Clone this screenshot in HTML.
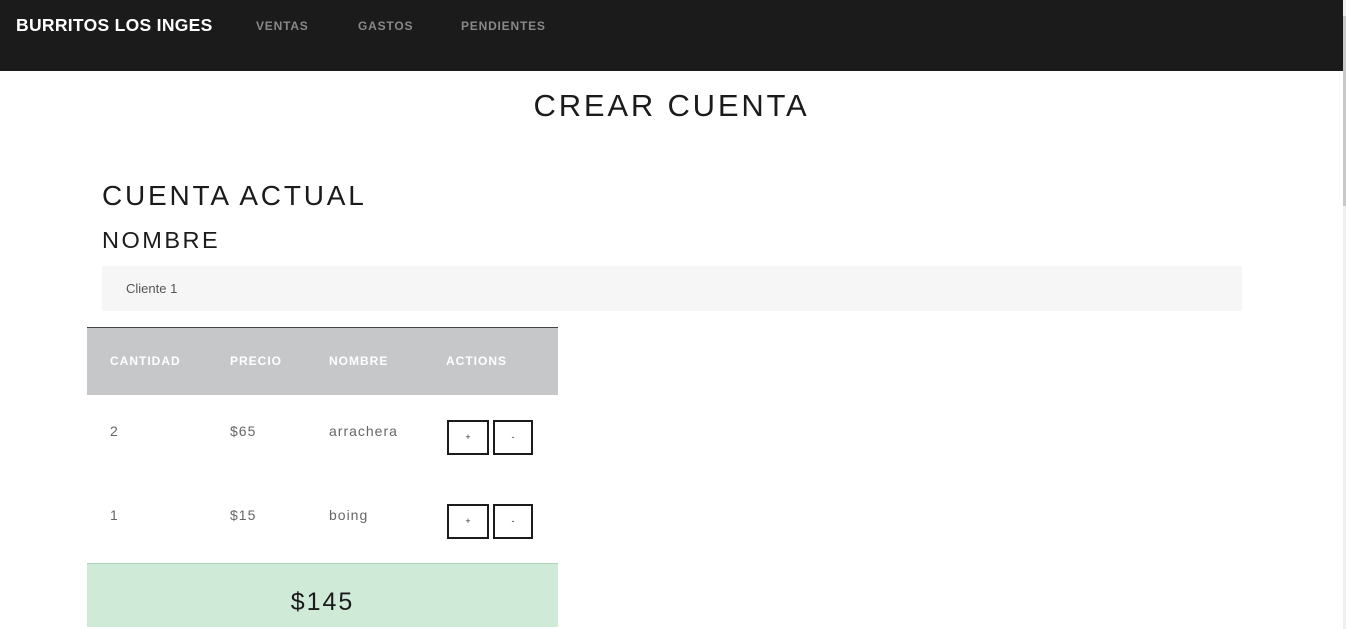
<!DOCTYPE html>
<html><head><style>
*{margin:0;padding:0;box-sizing:border-box}
body{width:1346px;height:629px;overflow:hidden;background:#fff;font-family:"Liberation Sans",sans-serif;position:relative}
.a{position:absolute;white-space:nowrap}
nav{position:absolute;left:0;top:0;width:1343px;height:71px;background:#1b1b1b}
.sb{position:absolute;left:1343px;top:0;width:3px;height:629px;background:#f0f0f0}
.th{position:absolute;top:354px;color:#fff;font-size:12px;font-weight:bold;letter-spacing:1px}
.td{position:absolute;color:#666;font-size:14px;letter-spacing:1px}
.b{position:absolute;width:42px;height:35px;border:2px solid #1b1b1b;font-size:9px;text-align:center;line-height:31px;color:#333}
</style></head><body>
<nav></nav>
<div class="sb"><div style="position:absolute;left:0;top:16px;width:3px;height:190px;background:#c8c8c8"></div></div>
<div class="a" style="left:16px;top:15px;color:#fff;font-size:17.5px;font-weight:bold;letter-spacing:0.3px">BURRITOS LOS INGES</div>
<div class="a" style="left:256px;top:19px;color:#888;font-size:12px;font-weight:bold;letter-spacing:0.8px">VENTAS</div>
<div class="a" style="left:358px;top:19px;color:#888;font-size:12px;font-weight:bold;letter-spacing:0.8px">GASTOS</div>
<div class="a" style="left:461px;top:19px;color:#888;font-size:12px;font-weight:bold;letter-spacing:0.8px">PENDIENTES</div>
<div class="a" style="left:0;width:1343px;text-align:center;top:88px;font-size:31px;letter-spacing:2.8px;color:#1b1b1b">CREAR CUENTA</div>
<div class="a" style="left:102px;top:180px;font-size:28px;letter-spacing:2.8px;color:#1b1b1b">CUENTA ACTUAL</div>
<div class="a" style="left:102px;top:227px;font-size:23.5px;letter-spacing:2.5px;color:#1b1b1b">NOMBRE</div>
<div class="a" style="left:102px;top:266px;width:1140px;height:45px;background:#f6f6f7"></div>
<div class="a" style="left:126px;top:281px;font-size:13px;color:#555">Cliente 1</div>
<div class="a" style="left:87px;top:327px;width:471px;height:68px;background:#c6c7c9;border-top:1px solid #444"></div>
<div class="th" style="left:110px">CANTIDAD</div>
<div class="th" style="left:230px">PRECIO</div>
<div class="th" style="left:329px">NOMBRE</div>
<div class="th" style="left:446px">ACTIONS</div>
<div class="td" style="left:110px;top:423px">2</div>
<div class="td" style="left:230px;top:423px">$65</div>
<div class="td" style="left:329px;top:423px">arrachera</div>
<div class="b" style="left:447px;top:420px">+</div>
<div class="b" style="left:493px;top:420px;width:40px">-</div>
<div class="td" style="left:110px;top:507px">1</div>
<div class="td" style="left:230px;top:507px">$15</div>
<div class="td" style="left:329px;top:507px">boing</div>
<div class="b" style="left:447px;top:504px">+</div>
<div class="b" style="left:493px;top:504px;width:40px">-</div>
<div class="a" style="left:87px;top:563px;width:471px;height:64px;background:#cfebd8;border-top:1px solid #a9d6b9"></div>
<div class="a" style="left:87px;width:471px;text-align:center;top:588px;font-size:25px;letter-spacing:2px;color:#1b1b1b">$145</div>
</body></html>
